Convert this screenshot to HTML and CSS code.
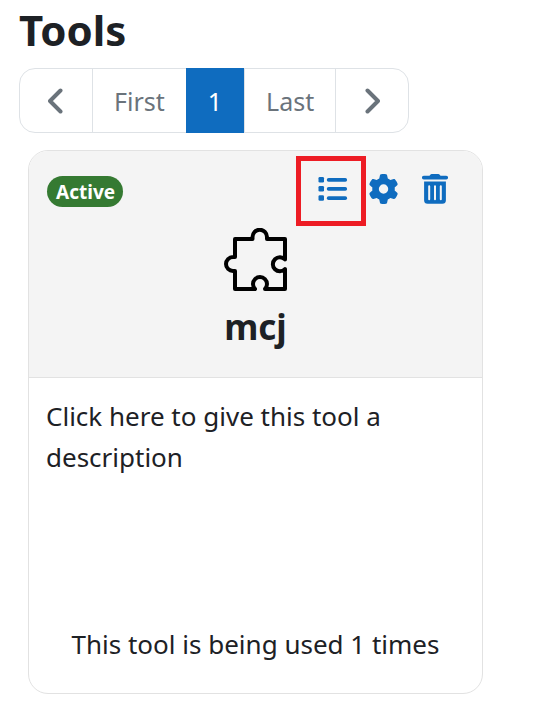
FILE: index.html
```html
<!DOCTYPE html>
<html lang="en">
<head>
<meta charset="utf-8">
<meta name="viewport" content="width=device-width, initial-scale=1">
<title>Tools</title>
<link rel="stylesheet" href="styles.css">
</head>
<body>
<main class="page">
  <h1 class="page-title">Tools</h1>
  <nav class="pager">
    <a class="pager-link pager-arrow" href="#" aria-label="Previous"><svg width="16" height="26" viewBox="0 0 16 26"><path d="M12.500 2.500L2 13L12.500 23.500"/></svg></a>
    <a class="pager-link" href="#">First</a>
    <a class="pager-link pager-current" href="#">1</a>
    <a class="pager-link" href="#">Last</a>
    <a class="pager-link pager-arrow" href="#" aria-label="Next"><svg width="16" height="26" viewBox="0 0 16 26"><path d="M3.500 2.500L14 13L3.500 23.500"/></svg></a>
  </nav>
  <article class="card">
    <header class="card-head">
      <div class="card-bar">
        <span class="badge">Active</span>
        <div class="actions">
          <button class="action action-marked" type="button" aria-label="Usage">
            <svg width="30" height="30" viewBox="0 0 30 30"><rect x=".5" y="3" width="5.500" height="5.500" rx="1.300"/><rect x=".5" y="12" width="5.500" height="5.500" rx="1.300"/><rect x=".5" y="21.300" width="5.500" height="5.500" rx="1.300"/><rect x="8.800" y="4" width="20.300" height="3.800" rx="1.800"/><rect x="8.800" y="13" width="20.300" height="3.800" rx="1.800"/><rect x="8.800" y="22.200" width="20.300" height="3.800" rx="1.800"/></svg>
          </button>
          <button class="action" type="button" aria-label="Settings">
            <svg width="30" height="30" viewBox="8 0 512 512"><path d="M495.900 166.600c3.200 8.700 .5 18.400-6.400 24.600l-43.300 39.400c1.100 8.300 1.700 16.800 1.700 25.400s-.6 17.100-1.700 25.400l43.300 39.400c6.900 6.200 9.600 15.900 6.400 24.600c-4.400 11.900-9.700 23.300-15.800 34.300l-4.700 8.100c-6.600 11-14 21.400-22.100 31.200c-5.900 7.200-15.700 9.600-24.500 6.800l-55.700-17.700c-13.400 10.300-28.200 18.900-44 25.400l-12.500 57.100c-2 9.100-9 16.300-18.200 17.800c-13.800 2.300-28 3.500-42.500 3.500s-28.700-1.200-42.500-3.500c-9.200-1.500-16.200-8.700-18.200-17.800l-12.500-57.100c-15.800-6.500-30.600-15.100-44-25.400L83.100 425.900c-8.800 2.800-18.600 .3-24.500-6.800c-8.100-9.800-15.500-20.200-22.100-31.200l-4.700-8.100c-6.100-11-11.400-22.400-15.800-34.300c-3.200-8.700-.5-18.400 6.400-24.600l43.300-39.400C64.600 273.100 64 264.600 64 256s.6-17.100 1.700-25.400L22.400 191.200c-6.900-6.200-9.600-15.900-6.400-24.600c4.400-11.900 9.700-23.300 15.800-34.300l4.700-8.100c6.600-11 14-21.400 22.100-31.200c5.900-7.200 15.700-9.600 24.500-6.800l55.700 17.700c13.400-10.300 28.200-18.900 44-25.400l12.500-57.100c2-9.100 9-16.300 18.200-17.800C227.300 1.200 241.500 0 256 0s28.700 1.200 42.500 3.500c9.200 1.500 16.200 8.700 18.200 17.800l12.500 57.100c15.800 6.500 30.600 15.100 44 25.400l55.700-17.700c8.800-2.800 18.600-.3 24.500 6.800c8.100 9.800 15.500 20.200 22.100 31.200l4.700 8.100c6.100 11 11.400 22.400 15.800 34.300zM256 336a80 80 0 1 0 0-160 80 80 0 1 0 0 160z"/></svg>
          </button>
          <button class="action" type="button" aria-label="Delete">
            <svg width="30" height="30" viewBox="0 0 30 30"><path fill-rule="evenodd" d="M9.500 1.700L10.300.7Q10.800 0 11.700 0H18.300Q19.200 0 19.700.7L20.500 1.700H26.200A1.900 1.900 0 0 1 26.200 5.500H3.800A1.900 1.900 0 0 1 3.800 1.700ZM4.100 7.500H25.900V26.200A3.600 3.600 0 0 1 22.300 29.800H7.700A3.600 3.600 0 0 1 4.100 26.200ZM9.200 11.200A1 1 0 0 0 8.200 12.200V25.200A1 1 0 0 0 10.200 25.200V12.200A1 1 0 0 0 9.200 11.200ZM15 11.200A1 1 0 0 0 14 12.200V25.200A1 1 0 0 0 16 25.200V12.200A1 1 0 0 0 15 11.200ZM20.800 11.200A1 1 0 0 0 19.800 12.200V25.200A1 1 0 0 0 21.800 25.200V12.200A1 1 0 0 0 20.800 11.200Z"/></svg>
          </button>
        </div>
      </div>
      <svg class="tool-icon" width="64" height="64" viewBox="0 0 64 64" aria-hidden="true"><path d="M11 11H28.500V9A7 7 0 0 1 43 9V11H61V31.500A7 7 0 1 0 61 41V61H41A7 7 0 1 0 31 61H11V43H9A7 7 0 0 1 9 29H11Z"/></svg>
      <h2 class="tool-name">mcj</h2>
    </header>
    <p class="description">Click here to give this tool a description</p>
    <p class="usage">This tool is being used 1 times</p>
  </article>
</main>
</body>
</html>
```
FILE: styles.css
```css
* {
  box-sizing: border-box;
}

body {
  margin: 0;
  background: #fff;
  color: #1d2125;
  font-family: "Noto Sans", "Open Sans", sans-serif;
  font-size: 26px;
  line-height: 41px;
}

h1, h2, p {
  margin: 0;
}

.page {
  padding: 3px 59px 11px 19px;
}

.page-title {
  font-size: 42px;
  line-height: 54px;
  font-weight: 700;
}

.pager {
  display: flex;
  width: fit-content;
  margin-top: 11px;
  border: 1px solid #dee2e6;
  border-radius: 16px;
  font-size: 25px;
}

.pager-link {
  display: flex;
  align-items: center;
  padding: 12px 21px 10px;
  border-left: 1px solid #dee2e6;
  color: #6a737b;
  text-decoration: none;
}

.pager-link:first-child {
  border-left: 0;
}

.pager-arrow {
  padding: 11px 28px;
}

.pager-arrow svg {
  fill: none;
  stroke: #6a737b;
  stroke-width: 4;
  stroke-linecap: round;
  stroke-linejoin: round;
}

.pager-current {
  margin: -1px 0;
  padding: 13px 22px 11px;
  border-left: 0;
  background: #0f6cbf;
  color: #fff;
}

.card {
  display: flex;
  flex-direction: column;
  margin: 17px 0 0 9px;
  border: 1px solid #e2e2e2;
  border-radius: 20px;
  overflow: hidden;
}

.card-head {
  display: flex;
  flex-direction: column;
  align-items: center;
  padding: 23px 32px 26px 18px;
  border-bottom: 1px solid #e2e2e2;
  background: #f4f4f4;
}

.card-bar {
  display: flex;
  justify-content: space-between;
  align-self: stretch;
}

.badge {
  margin-top: 2px;
  padding: 2px 8px 0 9px;
  border-radius: 16px;
  background: #357a32;
  color: #fff;
  font-size: 19px;
  line-height: 29px;
  font-weight: 700;
}

.actions {
  display: flex;
  gap: 21px;
}

.action {
  position: relative;
  width: 30px;
  height: 30px;
  padding: 0;
  border: 0;
  background: none;
}

.action svg {
  display: block;
  fill: #0f6cbf;
}

.action-marked::after {
  content: "";
  position: absolute;
  inset: -18px -18px -22px -22px;
  border: 5px solid #ed1c24;
}

.tool-icon {
  margin: 21px 0 10px 14px;
  fill: none;
  stroke: #000;
  stroke-width: 4;
  stroke-linejoin: round;
}

.tool-name {
  margin-left: 14px;
  font-size: 35px;
  line-height: 49px;
  font-weight: 700;
}

.description {
  min-height: 210px;
  padding: 18px 17px 0;
}

.usage {
  padding: 36px 17px 28px;
  text-align: center;
}
```
